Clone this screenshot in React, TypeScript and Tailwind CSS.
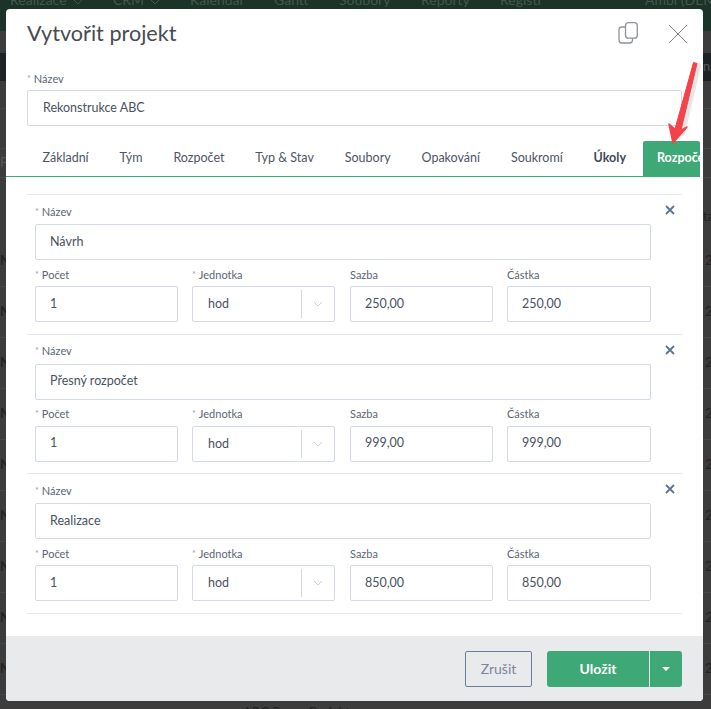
import React from 'react';

const tabs = ['Základní', 'Tým', 'Rozpočet', 'Typ & Stav', 'Soubory', 'Opakování', 'Soukromí'];

const items = [
  { name: 'Návrh', rate: '250,00' },
  { name: 'Přesný rozpočet', rate: '999,00' },
  { name: 'Realizace', rate: '850,00' },
];

const navItems = [
  { label: 'Realizace', width: 'w-[103px]', chevron: true },
  { label: 'CRM', width: 'w-[77px]', chevron: true },
  { label: 'Kalendář', width: 'w-[84px]' },
  { label: 'Gantt', width: 'w-[65px]' },
  { label: 'Soubory', width: 'w-[82px]' },
  { label: 'Reporty', width: 'w-[79px]' },
  { label: 'Registr', width: 'w-[145px]' },
  { label: 'Ambi (DEMO)', width: 'w-[80px]' },
];

const bgRows = [0, 1, 2, 3, 4, 5, 6, 7, 8];

function Label({ text, required }: { text: string; required?: boolean }) {
  return (
    <div className="h-[12px] flex items-center text-[11px] leading-none text-[#5b6474]">
      {required && <span className="text-[#9aa1ad] text-[9px] mr-[3px]">*</span>}
      {text}
    </div>
  );
}

function Field({ label, value, required }: { label: string; value: string; required?: boolean }) {
  return (
    <div className="flex flex-col gap-[6px]">
      <Label text={label} required={required} />
      <div className="h-[36px] flex items-center border border-[#d3d9e6] rounded-[2px] pl-[14px] text-[12.5px] text-[#4a5160] bg-white">
        {value}
      </div>
    </div>
  );
}

function BudgetRow({ name, rate }: { name: string; rate: string }) {
  return (
    <div className="relative h-[139.5px] border-t border-[#e6e8ec] pt-[10px] pl-[8px] pr-[31px]">
      <svg className="absolute right-[7px] top-[10px]" width="10" height="10" viewBox="0 0 10 10">
        <path d="M1 1l8 8M9 1l-8 8" stroke="#5d7391" strokeWidth="1.8" fill="none" />
      </svg>
      <div className="flex flex-col gap-[7px]">
        <Label text="Název" required />
        <div className="h-[36px] flex items-center border border-[#d3d9e6] rounded-[2px] pl-[14px] text-[12.5px] text-[#4a5160]">
          {name}
        </div>
      </div>
      <div className="grid grid-cols-[143px_144px_143px_144px] gap-x-[14px] mt-[8px]">
        <Field label="Počet" value="1" required />
        <div className="flex flex-col gap-[6px] w-[143px]">
          <Label text="Jednotka" required />
          <div className="h-[36px] flex items-center border border-[#d3d9e6] rounded-[2px] pl-[15px] text-[12.5px] text-[#4a5160]">
            <span className="flex-1 pt-[1px]">hod</span>
            <div className="w-[33px] h-[28px] border-l border-[#d3d9e6] flex items-center justify-center">
              <svg width="10" height="6" viewBox="0 0 10 6">
                <path d="M1 1l4 4 4-4" stroke="#c9ced8" strokeWidth="1" fill="none" />
              </svg>
            </div>
          </div>
        </div>
        <Field label="Sazba" value={rate} />
        <Field label="Částka" value={rate} />
      </div>
    </div>
  );
}

export default function App() {
  return (
    <div className="relative h-[709px] w-[711px] overflow-hidden bg-[#3c3c3c]" style={{ fontFamily: 'Lato, sans-serif' }}>
      {/* page behind the overlay */}
      <div className="h-[31px] bg-[#1b3328] flex pl-[10px] text-[14px] leading-[16px] text-[#46574e] overflow-hidden">
        {navItems.map((n) => (
          <span key={n.label} className={`${n.width} flex-none flex items-start gap-[6px] -mt-[8px] whitespace-nowrap`}>
            {n.label}
            {n.chevron && (
              <svg className="mt-[7px]" width="10" height="6" viewBox="0 0 10 6">
                <path d="M1 1l4 4 4-4" stroke="#46574e" strokeWidth="1" fill="none" />
              </svg>
            )}
          </span>
        ))}
      </div>
      <div className="h-[22px]" />
      <div className="h-[28px] bg-[#1f2224] flex justify-end items-center text-[13px] text-[#55585a]">
        <span className="w-[8px] overflow-hidden whitespace-nowrap">na</span>
      </div>
      <div className="h-[27px]" />
      <div className="h-[40px] border-t border-[#484848]" />
      <div className="h-[30px] border-y border-[#484848] flex items-center text-[13px] text-[#565656]">
        <span className="w-[6px] overflow-hidden">P</span>
      </div>
      <div className="h-[58px] pt-[20px] flex justify-end items-center text-[13px] text-[#232323]">
        <span className="w-[8px] overflow-hidden whitespace-nowrap">ta</span>
      </div>
      {bgRows.map((r) => (
        <div key={r} className="h-[51px] border-b border-[#474747] flex justify-between items-center text-[13px] text-[#232323]">
          <span className="w-[6px] overflow-hidden whitespace-nowrap font-bold">NA</span>
          <span className="w-[6px] overflow-hidden">2</span>
        </div>
      ))}
      <div className="pl-[243px] pt-[9px] text-[13px] leading-[16px] text-[#222222] whitespace-nowrap">ABC Beran Projekt</div>

      {/* modal */}
      <div className="absolute left-[6px] top-[9px] w-[697px] h-[692px] bg-white rounded-[4px] flex flex-col overflow-hidden">
        <div className="h-[63px] flex items-start pl-[21px] pr-[15px]">
          <h1 className="flex-1 text-[21.6px] leading-[28px] mt-[10px] text-[#474b52]">Vytvořit projekt</h1>
          <svg className="mt-[13px] mr-[30px]" width="20" height="22" viewBox="0 0 20 22" fill="none" stroke="#8f9296" strokeWidth="1.3">
            <rect x="7.5" y="0.7" width="11.8" height="15.5" rx="3" />
            <path d="M7.5 5H4a3 3 0 0 0-3 3v10a3 3 0 0 0 3 3h7.5a3 3 0 0 0 3-3v-1.8" />
          </svg>
          <svg className="mt-[15px]" width="20" height="20" viewBox="0 0 20 20" fill="none" stroke="#7f8387" strokeWidth="1">
            <path d="M1 1l18 18M19 1L1 19" />
          </svg>
        </div>

        <div className="pl-[21px] pr-[21px]">
          <div className="flex flex-col gap-[6px]">
            <Label text="Název" required />
            <div className="h-[36px] flex items-center border border-[#d3d9e6] rounded-[2px] pl-[15px] text-[12.5px] text-[#4a5160]">
              Rekonstrukce ABC
            </div>
          </div>
        </div>

        <div className="mt-[15px] mr-[3px] h-[36px] border-b border-[#3fa877] flex pl-[21px] text-[12.5px] text-[#4d5566] overflow-hidden">
          {tabs.map((t) => (
            <div key={t} className="px-[15.45px] flex items-center whitespace-nowrap">{t}</div>
          ))}
          <div className="px-[15.45px] flex items-center font-bold text-[#3f4859] whitespace-nowrap">Úkoly</div>
          <div className="ml-auto pl-[14px] w-[57px] flex-none bg-[#3fa877] text-white font-bold flex items-center rounded-t-[2px] overflow-hidden whitespace-nowrap">Rozpočet</div>
        </div>

        <div className="flex-1 mt-[17px] pl-[21px] pr-[21px]">
          {items.map((it) => (
            <BudgetRow key={it.name} name={it.name} rate={it.rate} />
          ))}
          <div className="border-t border-[#e6e8ec]" />
        </div>

        <div className="h-[65px] bg-[#e9eaec] flex items-center justify-end pr-[21px]">
          <button className="w-[67px] h-[36px] border border-[#6b7c9c] rounded-[2px] text-[14px] text-[#7a86a0]">Zrušit</button>
          <button className="ml-[15px] w-[102px] h-[36px] bg-[#3fa877] rounded-l-[3px] text-[14px] font-bold text-white">Uložit</button>
          <button className="ml-[1px] w-[32px] h-[36px] bg-[#3fa877] rounded-r-[3px] flex items-center justify-center">
            <svg width="8" height="4" viewBox="0 0 8 4"><path d="M0 0h8L4 4z" fill="#fff" /></svg>
          </button>
        </div>
      </div>

      {/* red annotation arrow */}
      <svg className="absolute left-[660px] top-[55px]" width="45" height="95" viewBox="0 0 45 95" fill="none">
        <path d="M36 9L20 76" stroke="#c8c8c8" strokeOpacity="0.45" strokeWidth="6" strokeLinecap="round" transform="translate(2 2)" />
        <path d="M33.5 7.5L37 8.5L21 75L15 74Z" fill="#f5424a" stroke="#f5424a" strokeWidth="1" strokeLinejoin="round" />
        <path d="M9 69L13 88L27 72L20 76L16 75Z" fill="#f5424a" stroke="#f5424a" strokeWidth="1.5" strokeLinejoin="round" />
      </svg>
    </div>
  );
}
